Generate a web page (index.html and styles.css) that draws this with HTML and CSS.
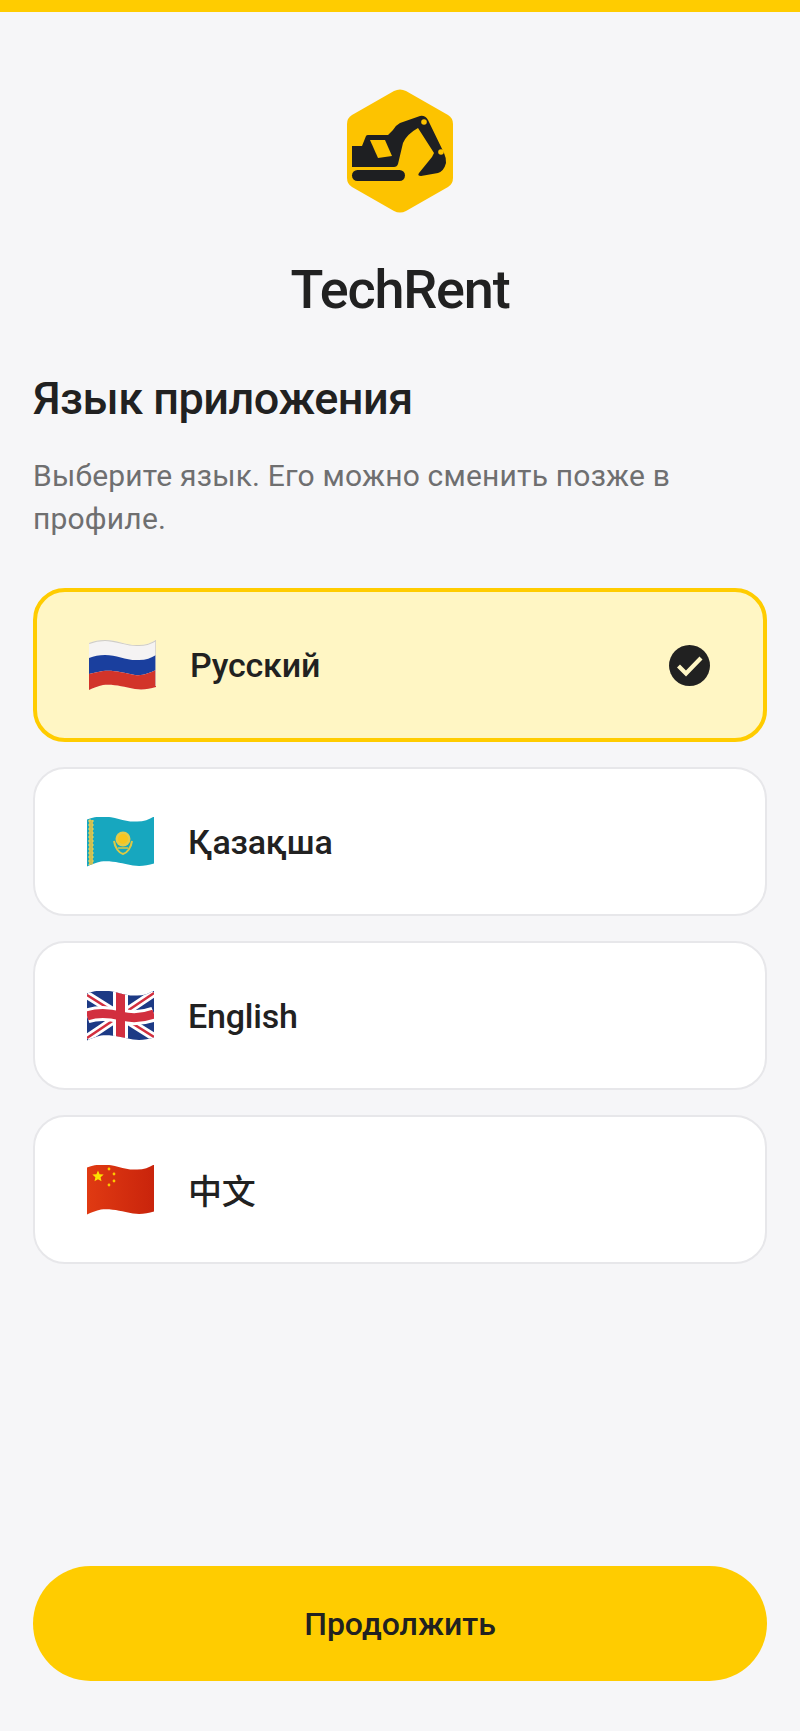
FILE: index.html
```html
<!DOCTYPE html>
<html lang="ru">
<head>
<meta charset="utf-8"/>
<title>TechRent</title>
<link rel="stylesheet" href="styles.css">
</head>
<body>
<div class="topbar"></div>
<div class="page">
	<div class="logo">
		<svg width="106" height="124" viewBox="0 0 106 124">
			<path d="M47 2 Q53 -1 59 2 L101 26 Q106 29 106 35 L106 89 Q106 95 101 98 L59 122 Q53 125 47 122 L5 98 Q0 95 0 89 L0 35 Q0 29 5 26 Z" fill="#fdc300"/>
			<path d="M5 78 L5 57 L15 57 L19 47 Q19.500 46 21 46 L41 46 L46 41 Q49 36 53 34 L73 27 Q78 26 81 31 L97 64 Q99 68 99 74 Q97 82 91 84 L74 87 Q70 87 72 84 L85 68 L87 64 L71 39 Q60 45 56 54 L51 75 Q50 78 47 78 Z" fill="#1e1f22"/>
			<path d="M23 51 L38 51 L45 67 L31 69 Z" fill="#fdc300"/>
			<rect x="5" y="81" width="53" height="11" rx="5.500" fill="#1e1f22"/>
			<circle cx="77" cy="33" r="2.800" fill="#fdc300"/>
			<circle cx="94" cy="63" r="2.800" fill="#fdc300"/>
		</svg>
	</div>
	<h1 class="brand">TechRent</h1>
	<h2 class="title">Язык приложения</h2>
	<p class="hint">Выберите язык. Его можно сменить позже в профиле.</p>

	<div class="langs">
		<div class="lang selected">
			<svg class="flag" viewBox="0 0 67 50">
				<rect width="67" height="50" fill="#f5f3f3"/>
				<path d="M0 18 C5 16 10 15 16 15 C28 15 38 21 50 20 C57 20 62 18 67 15 L67 30 C60 33 54 36 46 35 C34 33 26 30 14 31 C9 32 4 33 0 34 Z" fill="#1a3f9e"/>
				<path d="M0 34 C4 33 9 32 14 31 C26 30 34 33 46 35 C54 36 60 33 67 30 L67 50 L0 50 Z" fill="#d2342a"/>
				<path d="M0 3 C5 1 10 0 16 0 C28 0 38 6 50 5 C57 5 62 3 67 0" fill="none" stroke="#cfcdc6" stroke-width="2"/>
				<path d="M67 0 V46" stroke="#cfcdc6" stroke-width="1.500"/>
			</svg>
			<span class="name">Русский</span>
			<svg class="check" width="41" height="41" viewBox="0 0 41 41">
				<circle cx="20.500" cy="20.500" r="20.500" fill="#212121"/>
				<path d="M9.500 21 L17 28.500 L32 13" fill="none" stroke="#fff6c4" stroke-width="4.200"/>
			</svg>
		</div>
		<div class="lang">
			<svg class="flag" viewBox="0 0 67 50">
				<rect width="67" height="50" fill="#17a7bf"/>
				<path d="M2 3 H6 V48 H2 Z" fill="#cdbf52"/>
				<path d="M2 3 H6 V48 H2 Z" fill="none" stroke="#e8d75c" stroke-width="1" stroke-dasharray="2 2"/>
				<circle cx="36" cy="22" r="7.500" fill="#e3cb4a"/>
				<circle cx="36" cy="22" r="5" fill="#f7c51e"/>
				<path d="M27 24 C28 31 32 36 36 37 C40 36 44 31 45 24" fill="none" stroke="#dcc944" stroke-width="2"/>
				<path d="M31 31 H41" stroke="#dcc944" stroke-width="1.500"/>
			</svg>
			<span class="name">Қазақша</span>
		</div>
		<div class="lang">
			<svg class="flag" viewBox="0 0 67 50">
				<rect width="67" height="50" fill="#1d3a85"/>
				<path d="M0 4 L67 46 M67 2 L0 47" stroke="#fff" stroke-width="8"/>
				<path d="M0 4 L67 46 M67 2 L0 47" stroke="#d22f3f" stroke-width="2.500"/>
				<path d="M33.500 0 V50" stroke="#fff" stroke-width="15"/>
				<path d="M0 25 C12 21 22 22 34 25 C46 28 56 27 67 23" fill="none" stroke="#fff" stroke-width="15"/>
				<path d="M33.500 0 V50" stroke="#d22f3f" stroke-width="9"/>
				<path d="M0 25 C12 21 22 22 34 25 C46 28 56 27 67 23" fill="none" stroke="#d22f3f" stroke-width="9"/>
			</svg>
			<span class="name">English</span>
		</div>
		<div class="lang">
			<svg class="flag" viewBox="0 0 67 50">
				<defs>
					<linearGradient id="redshade" x1="0" y1="0" x2="1" y2="0">
						<stop offset="0" stop-color="#e03a12"/>
						<stop offset="1" stop-color="#c9240c"/>
					</linearGradient>
				</defs>
				<rect width="67" height="50" fill="url(#redshade)"/>
				<path d="M11 5.500 L12.600 9.300 L16.700 9.600 L13.600 12.300 L14.500 16.300 L11 14.200 L7.500 16.300 L8.400 12.300 L5.300 9.600 L9.400 9.300 Z" fill="#fce100"/>
				<circle cx="22" cy="4" r="1.400" fill="#fcc900"/>
				<circle cx="27" cy="9" r="1.400" fill="#fcc900"/>
				<circle cx="27" cy="16" r="1.400" fill="#fcc900"/>
				<circle cx="22" cy="20" r="1.400" fill="#fcc900"/>
			</svg>
			<span class="name">中文</span>
		</div>
	</div>

	<div class="spacer"></div>
	<button class="next">Продолжить</button>
</div>
</body>
</html>
```
FILE: styles.css
```css
html, body {
	margin: 0;
	height: 100%;
}
body {
	background-color: #f6f6f8;
	color: #212121;
	font-family: Roboto, "Noto Sans CJK SC", sans-serif;
}
.topbar {
	height: 12px;
	background-color: #ffcc00;
}
.page {
	height: 1719px;
	box-sizing: border-box;
	padding: 77px 33px 50px;
	display: flex;
	flex-direction: column;
}
.logo {
	display: flex;
	justify-content: center;
}
.logo svg {
	display: block;
}
.brand {
	margin: 44px 0 0;
	font-size: 54px;
	line-height: 66px;
	font-weight: 500;
	letter-spacing: -1.2px;
	text-align: center;
}
.title {
	margin: 47px 0 0;
	font-size: 45px;
	line-height: 58px;
	font-weight: 500;
	letter-spacing: -0.5px;
}
.hint {
	margin: 26px 0 0;
	font-size: 30px;
	line-height: 43px;
	letter-spacing: 0.2px;
	color: #6f6f70;
}
.langs {
	margin-top: 48px;
	display: flex;
	flex-direction: column;
	gap: 25px;
}
.lang {
	height: 149px;
	box-sizing: border-box;
	display: flex;
	align-items: center;
	gap: 34px;
	padding: 0 53px 0 52px;
	background-color: #fff;
	border: 2px solid #e7e7ea;
	border-radius: 32px;
}
.lang.selected {
	height: 154px;
	background-color: #fff6c4;
	border: 4px solid #ffcc00;
}
.flag {
	width: 67px;
	height: 50px;
	flex: none;
	clip-path: path("M0 3 C5 1 10 0 16 0 C28 0 38 6 50 5 C57 5 62 3 67 0 L67 47 C60 49 54 50 46 49 C34 47 26 44 14 45 C9 46 4 48 0 50 Z");
}
.name {
	flex: 1;
	font-size: 34px;
	font-weight: 500;
	letter-spacing: -0.2px;
}
.check {
	flex: none;
}
.spacer {
	flex: 1;
}
.next {
	height: 115px;
	border: none;
	border-radius: 58px;
	background-color: #ffcc00;
	color: #212121;
	font-family: inherit;
	font-size: 32px;
	font-weight: 500;
}
```
